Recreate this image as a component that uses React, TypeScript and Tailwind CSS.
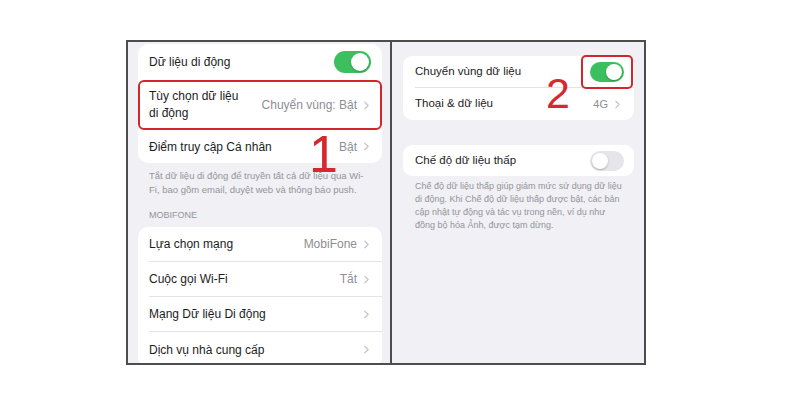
import { ChevronRight } from 'lucide-react';

const font = "font-['Liberation_Sans','Noto_Sans',sans-serif]";

function Toggle({ on, big }: { on: boolean; big?: boolean }) {
  const size = big ? 'w-[37px] h-[22px]' : 'w-[34px] h-[20px]';
  const knob = big ? 'w-[18px] h-[18px]' : 'w-[16px] h-[16px]';
  return (
    <div
      className={`${size} rounded-full p-[2px] flex items-center ${on ? 'bg-[#3cbf5f] justify-end' : 'bg-[#e6e6ea] justify-start'}`}
    >
      <div className={`${knob} rounded-full bg-white shadow-[0_1px_2px_rgba(0,0,0,0.25)]`} />
    </div>
  );
}

function Chevron() {
  return <ChevronRight size={13} strokeWidth={2.2} className="text-[#c5c5ca] shrink-0" />;
}

function Row({
  label,
  value,
  chevron = true,
  divider = true,
  h = 'h-[35px]',
  size = 'text-[12px]',
}: {
  label: string;
  value?: string;
  chevron?: boolean;
  divider?: boolean;
  h?: string;
  size?: string;
}) {
  return (
    <div className={`flex items-center ${h} pl-[11px]`}>
      <div
        className={`flex-1 h-full flex items-center pr-[9px] ${divider ? 'border-b border-[#e3e3e7]' : ''}`}
      >
        <span className={`flex-1 ${size} text-[#1c1c1e]`}>{label}</span>
        {value && <span className={`${size} text-[#8e8e93] mr-[3px]`}>{value}</span>}
        {chevron && <Chevron />}
      </div>
    </div>
  );
}

export default function App() {
  return (
    <div className={`w-[800px] h-[400px] bg-white pt-[40px] pl-[126px] ${font}`}>
      <div className="relative flex w-[520px] h-[325px] border-2 border-[#4d4d4d]">
        {/* left screen */}
        <div className="w-[264px] shrink-0 bg-[#f0f0f5] border-r-2 border-[#4d4d4d] overflow-hidden pl-[10px] pr-[8px] pt-[2px]">
          <div className="bg-white rounded-[10px]">
            <div className="flex items-center h-[36px] pl-[11px] pr-[11px]">
              <span className="flex-1 text-[12px] text-[#1c1c1e]">Dữ liệu di động</span>
              <Toggle on big />
            </div>
            <div className="flex items-center h-[50px] border-2 border-[#d3262c] rounded-[6px] pl-[9px] pr-[7px]">
              <span className="flex-1 text-[12px] leading-[17px] text-[#1c1c1e]">
                Tùy chọn dữ liệu
                <br />
                di động
              </span>
              <span className="text-[12px] text-[#8e8e93] mr-[3px]">Chuyển vùng: Bật</span>
              <Chevron />
            </div>
            <Row label="Điểm truy cập Cá nhân" value="Bật" divider={false} h="h-[33px]" />
          </div>

          <p className="pt-[6px] px-[11px] text-[9.5px] leading-[14px] text-[#949499]">
            Tắt dữ liệu di động để truyền tất cả dữ liệu qua Wi-
            <br />
            Fi, bao gồm email, duyệt web và thông báo push.
          </p>

          <p className="mt-[11px] px-[11px] text-[9px] leading-[14px] text-[#949499]">MOBIFONE</p>

          <div className="mt-[5px] bg-white rounded-[10px]">
            <Row label="Lựa chọn mạng" value="MobiFone" />
            <Row label="Cuộc gọi Wi-Fi" value="Tắt" />
            <Row label="Mạng Dữ liệu Di động" />
            <Row label="Dịch vụ nhà cung cấp" divider={false} />
          </div>
        </div>

        {/* right screen */}
        <div className="flex-1 bg-[#f0f0f5] pl-[11px] pr-[10px] pt-[14px]">
          <div className="bg-white rounded-[9px]">
            <div className="flex items-center h-[32px] pl-[12px]">
              <div className="flex-1 h-full flex items-center border-b border-[#e3e3e7] pr-[1px]">
                <span className="flex-1 text-[11.5px] text-[#1c1c1e]">Chuyển vùng dữ liệu</span>
                <div className="-my-[7px] border-2 border-[#d3262c] rounded-[5px] px-[7px] py-[5px]">
                  <Toggle on />
                </div>
              </div>
            </div>
            <div className="flex items-center h-[32px] pl-[12px] pr-[10px]">
              <span className="flex-1 text-[11.5px] text-[#1c1c1e]">Thoại &amp; dữ liệu</span>
              <span className="text-[11px] text-[#8e8e93] mr-[3px]">4G</span>
              <Chevron />
            </div>
          </div>

          <div className="mt-[25px] bg-white rounded-[9px] flex items-center h-[31px] pl-[12px] pr-[10px]">
            <span className="flex-1 text-[11.5px] text-[#1c1c1e]">Chế độ dữ liệu thấp</span>
            <Toggle on={false} />
          </div>

          <p className="mt-[4px] px-[12px] text-[9px] leading-[13px] text-[#949499]">
            Chế độ dữ liệu thấp giúp giảm mức sử dụng dữ liệu
            <br />
            di động. Khi Chế độ dữ liệu thấp được bật, các bản
            <br />
            cập nhật tự động và tác vụ trong nền, ví dụ như
            <br />
            đồng bộ hóa Ảnh, được tạm dừng.
          </p>
        </div>

        {/* step markers */}
        <span className="absolute left-[181px] top-[86px] text-[52px] leading-none text-[#d7282f]">1</span>
        <span className="absolute left-[418px] top-[30px] text-[43px] leading-none text-[#d7282f]">2</span>
      </div>
    </div>
  );
}
